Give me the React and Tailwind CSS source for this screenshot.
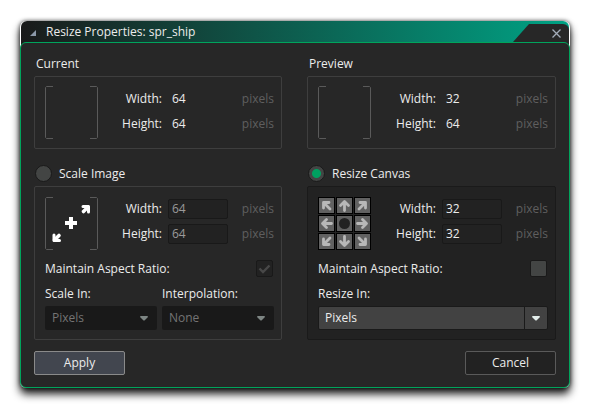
import React, { useId, useState } from "react";

function Brackets({ scaling = false }) {
  return (
    <svg className="size-[53px] shrink-0" viewBox="0 0 53 53" fill="none" aria-hidden="true">
      <path d="M8 .5H1.500L.5 1.500V51.500L1.500 52.500H8M45 .5H51.500L52.500 1.500V51.500L51.500 52.500H45" stroke="#5a5a5a" />
      {scaling && (
        <g stroke="#fff">
          <path d="M26 20V32M20 26H32" strokeWidth="4" />
          <path d="M38 9.500H43.500V15" strokeWidth="3" strokeLinejoin="round" strokeLinecap="round" />
          <path d="M43 10L38.500 14.500" strokeWidth="3.600" strokeLinecap="round" />
          <path d="M14.500 43.500H9V38" strokeWidth="3" strokeLinejoin="round" strokeLinecap="round" />
          <path d="M9.500 43L14 38.500" strokeWidth="3.600" strokeLinecap="round" />
        </g>
      )}
    </svg>
  );
}

const STRAIGHT = "M7.500 12.500V4.500M3.500 7.500L7.500 3.500L11.500 7.500";
const DIAGONAL = "M11 11L5 5M4.500 10V4.500H10";

const ANCHORS = [
  { name: "Top left", path: DIAGONAL, turn: 0 },
  { name: "Top", path: STRAIGHT, turn: 0 },
  { name: "Top right", path: DIAGONAL, turn: 90 },
  { name: "Left", path: STRAIGHT, turn: 270 },
  { name: "Centre", path: null, turn: 0 },
  { name: "Right", path: STRAIGHT, turn: 90 },
  { name: "Bottom left", path: DIAGONAL, turn: 270 },
  { name: "Bottom", path: STRAIGHT, turn: 180 },
  { name: "Bottom right", path: DIAGONAL, turn: 180 },
];

function AnchorGrid() {
  return (
    <div className="grid shrink-0 grid-cols-3 gap-px">
      {ANCHORS.map((a) => (
        <button
          key={a.name}
          type="button"
          aria-label={a.name}
          className="size-[17px] border border-black bg-[#616161]"
        >
          <svg className="block size-[15px]" viewBox="0 0 15 15" fill="none">
            {a.path ? (
              <path
                d={a.path}
                stroke="#b8b8b8"
                strokeWidth="2.8"
                strokeLinecap="round"
                strokeLinejoin="round"
                transform={`rotate(${a.turn} 7.5 7.5)`}
              />
            ) : (
              <circle cx="7.5" cy="7.5" r="5.5" fill="#222" />
            )}
          </svg>
        </button>
      ))}
    </div>
  );
}

function SizeRow({ label, value, editable, disabled }) {
  const id = useId();
  return (
    <div className="flex h-5 items-center">
      <label htmlFor={editable ? id : undefined} className="flex-1 text-right">
        {label}
      </label>
      {editable ? (
        <input
          id={id}
          defaultValue={value}
          disabled={disabled}
          className="ml-1.5 h-5 w-[60px] rounded-xs border border-[#191919] bg-[#222222] px-[3px] pb-0.5 disabled:text-[#9a9a9a]"
        />
      ) : (
        <span className="ml-1.5 w-[60px] px-1">{value}</span>
      )}
      <span className="w-[46px] text-right text-[#5f5f5f]">pixels</span>
    </div>
  );
}

function Dimensions({ picture, width, height, editable, disabled, className }) {
  return (
    <div className="flex">
      {picture}
      <div className={`flex flex-1 flex-col gap-[5px] ${className}`}>
        <SizeRow label="Width:" value={width} editable={editable} disabled={disabled} />
        <SizeRow label="Height:" value={height} editable={editable} disabled={disabled} />
      </div>
    </div>
  );
}

function SizePanel({ title, width, height }) {
  return (
    <section>
      <h2 className="flex h-5 items-center px-0.5">{title}</h2>
      <div className="mt-0.5 rounded-xs border border-[#3e3e3e] py-[9px] pr-[7px] pl-2.5">
        <Dimensions picture={<Brackets />} width={width} height={height} className="pt-[3px]" />
      </div>
    </section>
  );
}

function Arrow({ className }) {
  return (
    <svg className={className} viewBox="0 0 8 5" aria-hidden="true">
      <path d="M.5 0H7.500L8 1L4.500 4.500H3.500L0 1Z" fill="currentColor" />
    </svg>
  );
}

function Choice({ label, value, disabled }) {
  const id = useId();
  return (
    <div className="flex-1">
      <label htmlFor={id} className="flex h-5 items-center">
        {label}
      </label>
      <div
        className={
          disabled
            ? "relative mt-0.5 h-6 rounded-xs bg-[#191919]"
            : "relative mt-0.5 h-6 rounded-xs border border-[#1a1a1a] bg-[#424242]"
        }
      >
        <select
          id={id}
          disabled={disabled}
          defaultValue={value}
          className={
            disabled
              ? "h-full w-full appearance-none px-[7px] text-[#747474] opacity-100"
              : "h-full w-full appearance-none px-1.5"
          }
        >
          <option>{value}</option>
        </select>
        {disabled ? (
          <Arrow className="pointer-events-none absolute top-2.5 right-[9px] h-[5px] w-2 text-[#7d8583]" />
        ) : (
          <span className="pointer-events-none absolute inset-y-0 right-0 flex w-[23px] items-center justify-center border-l border-[#1a1a1a]">
            <Arrow className="h-[5px] w-2 text-[#e3eeeb]" />
          </span>
        )}
      </div>
    </div>
  );
}

function Mode({ label, checked, onChange, children }) {
  return (
    <section>
      <label className="flex h-[17px] items-center gap-[7px] px-px">
        <input
          type="radio"
          name="mode"
          checked={checked}
          onChange={onChange}
          className="size-[17px] appearance-none rounded-full border border-[#191919] bg-[#434544] checked:bg-[radial-gradient(circle,#00a060_4px,#434544_5px)]"
        />
        {label}
      </label>
      <div
        className={
          checked
            ? "mt-1 rounded-xs border border-[#1a1a1a] bg-[#222222] pt-2.5 pr-[7px] pb-[9px] pl-2.5"
            : "mt-1 rounded-xs border border-[#3e3e3e] pt-2.5 pr-[7px] pb-[9px] pl-2.5"
        }
      >
        {children}
      </div>
    </section>
  );
}

function AspectRatio({ checked, disabled }) {
  return (
    <label className="mt-2.5 flex h-[17px] items-center justify-between pr-px">
      Maintain Aspect Ratio:
      <span className="relative flex">
        <input
          type="checkbox"
          defaultChecked={checked}
          disabled={disabled}
          className="peer size-[17px] appearance-none rounded-xs border border-[#191919] bg-[#434544] disabled:bg-[#222222]"
        />
        <svg
          className="pointer-events-none absolute inset-0 hidden size-[17px] text-[#484848] peer-checked:block"
          viewBox="0 0 17 17"
          fill="none"
        >
          <path d="M3.500 8.500L7 12L13.500 5.500" stroke="currentColor" strokeWidth="2.4" />
        </svg>
      </span>
    </label>
  );
}

export default function App() {
  const [mode, setMode] = useState("canvas");

  return (
    <main className="min-h-screen bg-white px-5 pt-[21px] pb-5 font-['Open_Sans','Noto_Sans',sans-serif] text-[12px] leading-4 text-[#ececec]">
      <div
        role="dialog"
        aria-label="Resize Properties"
        className="rounded-md shadow-[0_6px_9px_0_rgba(0,0,0,0.9),0_0_4px_rgba(0,0,0,0.7)]"
      >
        <header className="mx-px flex h-[26px] items-start justify-between rounded-t-md bg-linear-to-r/srgb from-[#1a1a1a] to-[#00a284]">
          <div className="flex h-[22px] items-center gap-2.5 pl-[9px]">
            <svg className="mt-0.5 size-1.5" viewBox="0 0 6 6" aria-hidden="true">
              <path d="M6 0V6H0Z" fill="#8b98a8" />
            </svg>
            <h1>Resize Properties: spr_ship</h1>
          </div>
          <button
            type="button"
            aria-label="Close"
            className="mt-[3px] flex h-[23px] w-14 justify-end rounded-tr-md bg-[#272727] pt-[5px] pr-2 [clip-path:polygon(0_18px,16px_0,100%_0,100%_100%,0_100%)]"
          >
            <svg className="h-[9px] w-[9px]" viewBox="0 0 9 9" fill="none">
              <path d="M.5 .5L8.500 8.500M8.500 .5L.5 8.500" stroke="#a3acb9" strokeWidth="1.3" />
            </svg>
          </button>
        </header>
        <div className="relative -mt-[5px] rounded-md border border-[#00a45c] bg-[#272727] px-[13px] pt-[11px] pb-3">
          <div className="grid grid-cols-[248fr_249fr] gap-x-[25px] gap-y-4">
            <SizePanel title="Current" width={64} height={64} />
            <SizePanel title="Preview" width={32} height={64} />
            <Mode label="Scale Image" checked={mode === "scale"} onChange={() => setMode("scale")}>
              <Dimensions picture={<Brackets scaling />} width={64} height={64} editable disabled className="pt-0.5" />
              <AspectRatio checked disabled />
              <div className="mt-[7px] flex gap-[5px]">
                <Choice label="Scale In:" value="Pixels" disabled />
                <Choice label="Interpolation:" value="None" disabled />
              </div>
            </Mode>
            <Mode label="Resize Canvas" checked={mode === "canvas"} onChange={() => setMode("canvas")}>
              <Dimensions picture={<AnchorGrid />} width={32} height={32} editable className="pt-0.5" />
              <AspectRatio />
              <div className="mt-[7px] flex">
                <Choice label="Resize In:" value="Pixels" />
              </div>
            </Mode>
          </div>
          <div className="mt-[11px] flex justify-between">
            <button type="button" className="h-6 w-[91px] rounded-xs border border-[#8a8a8a] bg-[#42464f]">
              Apply
            </button>
            <button type="button" className="h-6 w-[91px] rounded-xs border border-[#5a5a5a] bg-[#222222]">
              Cancel
            </button>
          </div>
        </div>
      </div>
    </main>
  );
}
